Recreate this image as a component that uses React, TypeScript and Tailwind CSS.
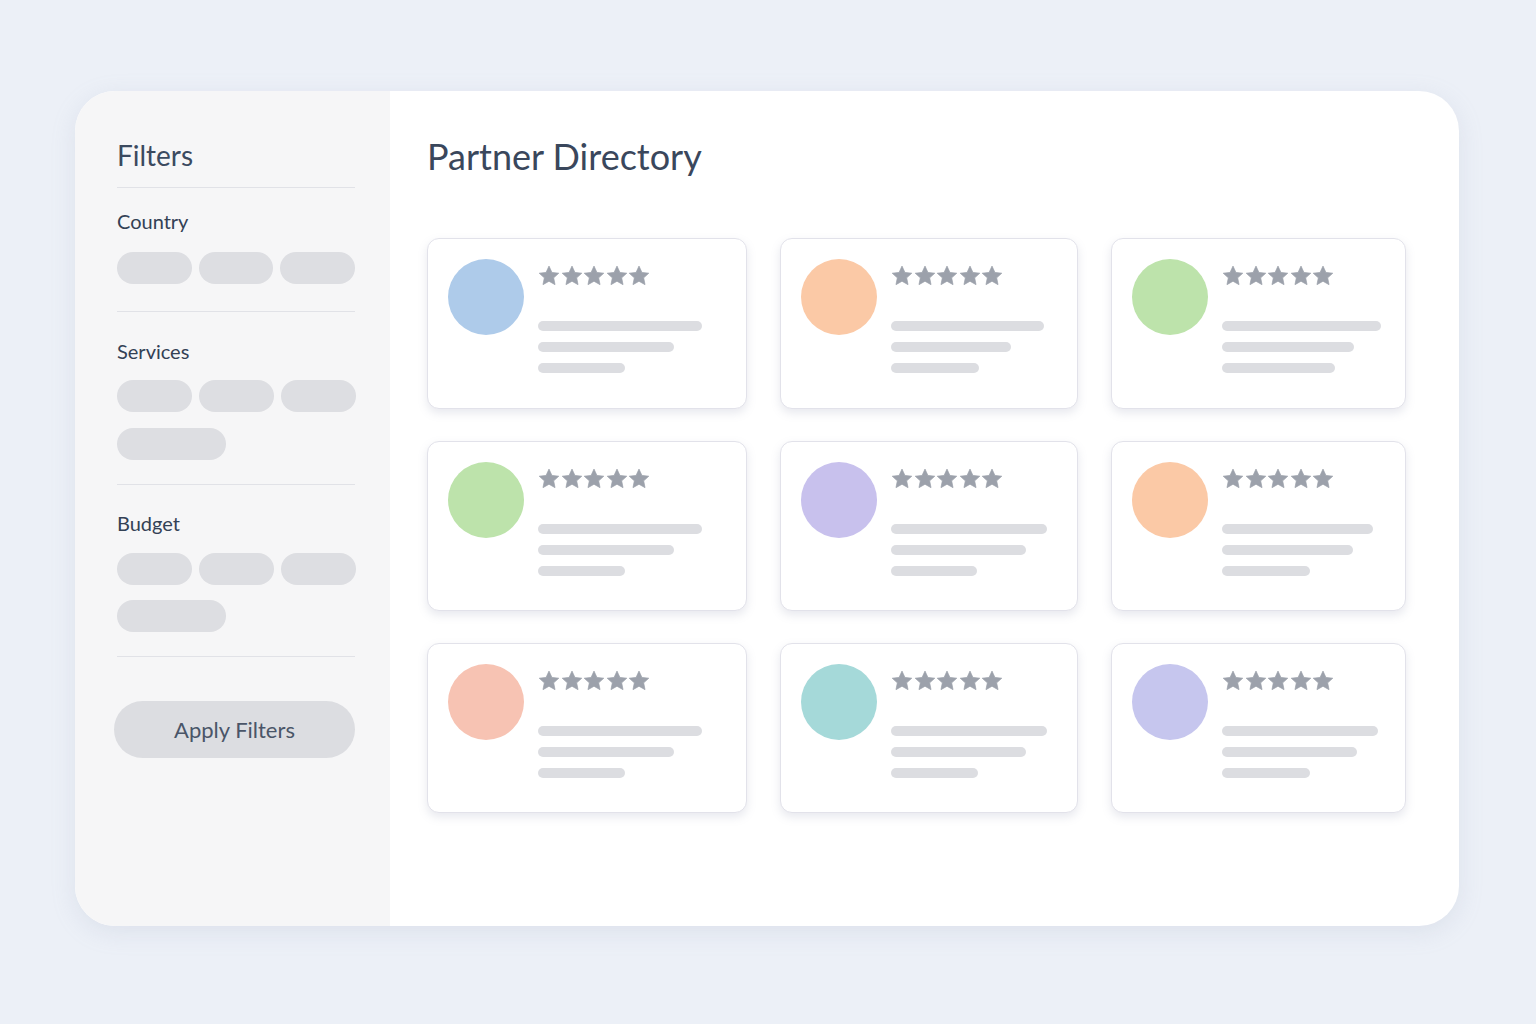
const partners = [
  { color: "bg-[#aecbea]", lines: ["w-[164px]", "w-[136px]", "w-[87px]"] },
  { color: "bg-[#fbc9a6]", lines: ["w-[153px]", "w-[120px]", "w-[88px]"] },
  { color: "bg-[#bde3ab]", lines: ["w-[159px]", "w-[132px]", "w-[113px]"] },
  { color: "bg-[#bde3ab]", lines: ["w-[164px]", "w-[136px]", "w-[87px]"] },
  { color: "bg-[#c8c1ed]", lines: ["w-[156px]", "w-[135px]", "w-[86px]"] },
  { color: "bg-[#fbc9a6]", lines: ["w-[151px]", "w-[131px]", "w-[88px]"] },
  { color: "bg-[#f7c3b3]", lines: ["w-[164px]", "w-[136px]", "w-[87px]"] },
  { color: "bg-[#a5d9d9]", lines: ["w-[156px]", "w-[135px]", "w-[87px]"] },
  { color: "bg-[#c6c6ee]", lines: ["w-[156px]", "w-[135px]", "w-[88px]"] },
];

function Star() {
  return (
    <svg width="22" height="21" viewBox="0 0 24 23" className="shrink-0">
      <path
        d="M12 1.2l3.2 6.9 7.5.9-5.6 5.1 1.5 7.4L12 17.8l-6.6 3.7 1.5-7.4L1.3 9l7.5-.9z"
        fill="#9ca1ab"
        stroke="#9ca1ab"
        strokeWidth="0.8"
        strokeLinejoin="round"
      />
    </svg>
  );
}

function Pill({ wide }: { wide?: boolean }) {
  return <div className={`h-[32px] rounded-full bg-[#dddee2] ${wide ? "w-[109px]" : "w-[75px]"}`} />;
}

function PartnerCard({ color, lines }: { color: string; lines: string[] }) {
  return (
    <div className="rounded-[12px] border border-[#e2e2ea] bg-white shadow-[0_4px_10px_rgba(120,125,160,0.18)] p-[20px] flex gap-[14px]">
      <div className={`w-[76px] h-[76px] rounded-full shrink-0 ${color}`} />
      <div className="flex flex-col pt-[6px]">
        <div className="flex gap-[0.5px]">
          <Star />
          <Star />
          <Star />
          <Star />
          <Star />
        </div>
        <div className="mt-[35px] flex flex-col gap-[11px]">
          {lines.map((w, i) => (
            <div key={i} className={`h-[10px] rounded-full bg-[#dcdde1] ${w}`} />
          ))}
        </div>
      </div>
    </div>
  );
}

export default function App() {
  return (
    <div
      className="w-[1536px] h-[1024px] bg-[#ecf0f7] pt-[91px] pl-[75px]"
      style={{ fontFamily: "Lato, 'Open Sans', sans-serif" }}
    >
      <div className="w-[1384px] h-[835px] rounded-[40px] bg-white flex overflow-hidden shadow-[0_6px_24px_rgba(150,160,190,0.18)]">
        <aside className="w-[315px] bg-[#f6f6f7] pl-[42px] pt-[50px]">
          <div className="w-[238px]">
            <h2 className="text-[28px] text-[#3b4a5f] leading-none pb-[18px] border-b border-[#e1e2e7]">Filters</h2>
            <div className="pt-[23px] pb-[27px] border-b border-[#e1e2e7]">
              <div className="text-[20px] text-[#334155] leading-none">Country</div>
              <div className="mt-[21px] flex gap-[7px]">
                <Pill />
                <Pill />
                <Pill />
              </div>
            </div>
            <div className="pt-[29px] pb-[24px] border-b border-[#e1e2e7]">
              <div className="text-[20px] text-[#334155] leading-none">Services</div>
              <div className="mt-[19px] flex flex-wrap gap-x-[7px] gap-y-[16px] w-[245px]">
                <Pill />
                <Pill />
                <Pill />
                <Pill wide />
              </div>
            </div>
            <div className="pt-[28px] pb-[24px] border-b border-[#e1e2e7]">
              <div className="text-[20px] text-[#334155] leading-none">Budget</div>
              <div className="mt-[20px] flex flex-wrap gap-x-[7px] gap-y-[15px] w-[245px]">
                <Pill />
                <Pill />
                <Pill />
                <Pill wide />
              </div>
            </div>
          </div>
          <button className="mt-[44px] -ml-[3px] w-[241px] h-[57px] rounded-full bg-[#dcdde1] text-[22px] text-[#4a5568]">
            Apply Filters
          </button>
        </aside>
        <main className="flex-1 pl-[37px] pt-[43px]">
          <h1 className="text-[36px] text-[#3a475c] leading-tight">Partner Directory</h1>
          <div className="mt-[59px] grid grid-cols-[320px_298px_295px] grid-rows-[171px_170px_170px] gap-x-[33px] gap-y-[32px]">
            {partners.map((p, i) => (
              <PartnerCard key={i} color={p.color} lines={p.lines} />
            ))}
          </div>
        </main>
      </div>
    </div>
  );
}
